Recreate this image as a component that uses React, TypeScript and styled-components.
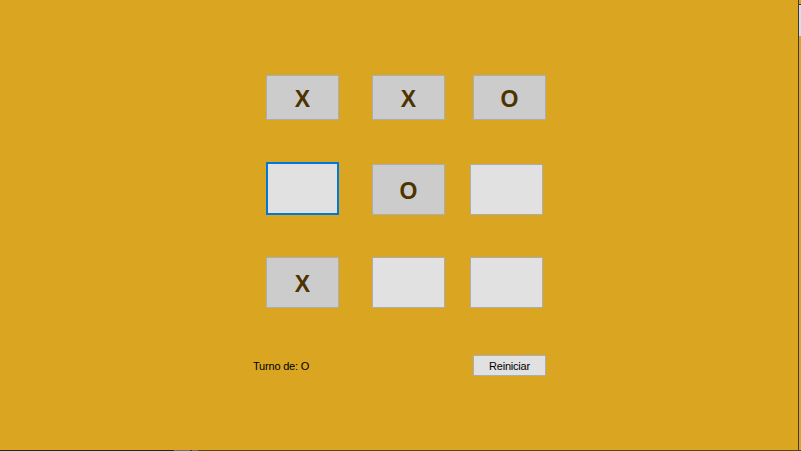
import React from "react";
import styled, { createGlobalStyle } from "styled-components";

const GlobalStyle = createGlobalStyle`
  html, body { margin: 0; padding: 0; background: #DAA520; }
  body { font-family: "Liberation Sans", Arial, sans-serif; }
`;

const Screen = styled.div`
  width: 801px;
  height: 451px;
  display: flex;
  flex-direction: column;
  background: #daa520;
  overflow: hidden;
`;

const Main = styled.div`
  flex: 1;
  display: flex;
  min-height: 0;
`;

const Canvas = styled.div`
  flex: 1;
  display: flex;
  flex-direction: column;
  align-items: flex-start;
  padding: 75px 0 0 253px;
  box-sizing: border-box;
`;

const RightEdge = styled.div`
  width: 2px;
  border-left: 1px solid #3d3a33;
  display: flex;
  flex-direction: column;
`;

const Thumb = styled.div`
  margin-top: 4px;
  height: 31px;
  border-top: 1px solid #3d3a33;
  background: #d6dde6;
`;

const BottomEdge = styled.div`
  height: 1px;
  display: flex;
  background: #5a4614;
`;

const EdgeSeg = styled.div<{ $w: number; $c: string }>`
  width: ${(p) => p.$w}px;
  background: ${(p) => p.$c};
`;

const Board = styled.div`
  margin-left: 13px;
  display: flex;
  flex-direction: column;
  gap: 42px;
`;

const Row = styled.div`
  display: flex;
  align-items: flex-end;
`;

const Cell = styled.button<{ $filled?: boolean; $focused?: boolean; $h: number; $ml: number }>`
  box-sizing: border-box;
  width: 73px;
  height: ${(p) => p.$h}px;
  margin: 0 0 0 ${(p) => p.$ml}px;
  padding: 3px 0 0;
  border: ${(p) => (p.$focused ? "2px solid #0078d7" : "1px solid #adadad")};
  background: ${(p) => (p.$filled ? "#cccccc" : "#e1e1e1")};
  color: #4d3300;
  font-family: "Liberation Sans", Arial, sans-serif;
  font-weight: bold;
  font-size: 23px;
  line-height: 1;
  display: flex;
  align-items: center;
  justify-content: center;
  outline: none;
  cursor: default;
`;

const Footer = styled.div`
  margin-top: 47px;
  width: 293px;
  height: 21px;
  display: flex;
  align-items: center;
  justify-content: space-between;
`;

const TurnLabel = styled.span`
  font-size: 11px;
  letter-spacing: -0.2px;
  color: #000;
  padding-top: 1px;
`;

const ResetButton = styled.button`
  box-sizing: border-box;
  width: 73px;
  height: 21px;
  margin: 0;
  padding: 0;
  border: 1px solid #adadad;
  background: #e1e1e1;
  color: #000;
  font-family: "Liberation Sans", Arial, sans-serif;
  font-size: 11px;
  letter-spacing: -0.2px;
  outline: none;
`;

type CellSpec = { v: string; ml: number; h: number; focused?: boolean };

const rows: CellSpec[][] = [
  [
    { v: "X", ml: 0, h: 45 },
    { v: "X", ml: 33, h: 45 },
    { v: "O", ml: 28, h: 45 },
  ],
  [
    { v: "", ml: 0, h: 53, focused: true },
    { v: "O", ml: 33, h: 51 },
    { v: "", ml: 25, h: 51 },
  ],
  [
    { v: "X", ml: 0, h: 51 },
    { v: "", ml: 33, h: 51 },
    { v: "", ml: 25, h: 51 },
  ],
];

export default function App() {
  return (
    <>
      <GlobalStyle />
      <Screen>
        <Main>
          <Canvas>
            <Board>
              {rows.map((r, i) => (
                <Row key={i}>
                  {r.map((c, j) => (
                    <Cell
                      key={j}
                      $filled={c.v !== ""}
                      $focused={c.focused}
                      $h={c.h}
                      $ml={c.ml}
                    >
                      {c.v}
                    </Cell>
                  ))}
                </Row>
              ))}
            </Board>
            <Footer>
              <TurnLabel>Turno de: O</TurnLabel>
              <ResetButton>Reiniciar</ResetButton>
            </Footer>
          </Canvas>
          <RightEdge>
            <Thumb />
          </RightEdge>
        </Main>
        <BottomEdge>
          <EdgeSeg $w={174} $c="#1f2535" />
          <EdgeSeg $w={16} $c="#6e6e6e" />
          <EdgeSeg $w={2} $c="#3a3a3a" />
          <EdgeSeg $w={6} $c="#6e6e6e" />
        </BottomEdge>
      </Screen>
    </>
  );
}
